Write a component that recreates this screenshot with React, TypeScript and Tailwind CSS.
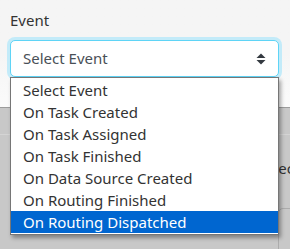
const options = [
  'Select Event',
  'On Task Created',
  'On Task Assigned',
  'On Task Finished',
  'On Data Source Created',
  'On Routing Finished',
  'On Routing Dispatched',
];

function SortIcon() {
  return (
    <svg width="10" height="12" viewBox="0 0 10 12" className="text-[#343a40]">
      <path d="M5 0.5 L9.5 5 L0.5 5 Z" fill="currentColor" />
      <path d="M5 11.5 L9.5 7 L0.5 7 Z" fill="currentColor" />
    </svg>
  );
}

export default function App() {
  const active = options.length - 1;

  return (
    <div className="relative w-[290px] h-[249px] overflow-hidden font-['Noto_Sans',sans-serif]">
      {/* form area */}
      <div className="h-[107px] bg-gradient-to-b from-[#f5f5f5] via-[#f5f5f5] to-[#fbfbfb] pl-[10px] pr-[11px] pt-[9px]">
        <label className="block text-[15px] leading-[22px] text-[#333]">Event</label>
        <div className="mt-[9px] h-[37px] flex items-center justify-between rounded-[5px] border border-[#5fd4f6] bg-white pl-[12px] pr-[12px] shadow-[0_0_0_3px_#c3ebf9]">
          <span className="text-[15px] text-[#495057]">Select Event</span>
          <SortIcon />
        </div>
      </div>
      <div className="h-px bg-[#9c9c9c]" />

      {/* dimmed page below */}
      <div className="relative h-[141px] bg-[#c8c8c8]">
        <div className="h-[26px]" />
        <div className="h-px bg-[#d4d4d4]" />
        <div className="flex justify-end pt-[22px] pr-[0px]">
          <span className="text-[15px] leading-[22px] text-[#333] whitespace-nowrap -mr-[4px]">Selec</span>
        </div>
        <div className="absolute left-[278px] top-[100px] w-[40px] h-[60px] rounded-[5px] border border-[#acacac]" />
      </div>

      {/* native dropdown list */}
      <div className="absolute left-[10px] top-[77px] w-[269px] border border-[#767676] bg-white py-px shadow-[2px_3px_4px_rgba(0,0,0,0.35)]">
        {options.map((o, i) => (
          <div
            key={o}
            className={`h-[22px] pl-[12px] text-[15px] leading-[22px] whitespace-nowrap ${
              i === active ? 'bg-[#0066d0] text-white' : 'text-[#333]'
            }`}
          >
            {o}
          </div>
        ))}
      </div>
    </div>
  );
}
